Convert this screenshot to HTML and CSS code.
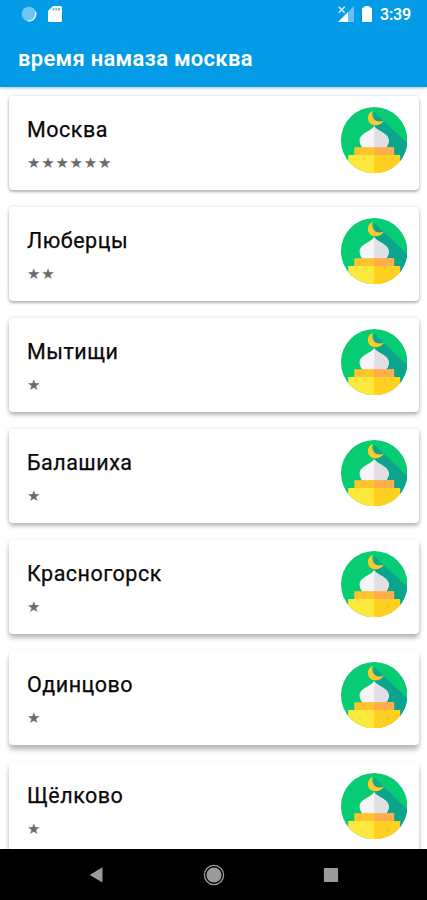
FILE: index.html
```html
<!DOCTYPE html>
<html lang="ru">
<head>
<meta charset="utf-8">
<title>время намаза москва</title>
<link rel="stylesheet" href="styles.css">
</head>
<body>
<svg class="defs" aria-hidden="true">
  <defs>
    <clipPath id="disc"><circle cx="33.2" cy="33.2" r="33.2"/></clipPath>
    <symbol id="mosque" viewBox="0 0 66.4 66.4">
      <g clip-path="url(#disc)">
        <path fill="#08cc74" d="M0 0h67v67H0z"/>
        <path fill="#0aa58c" d="M33 4.500L67 37V54H53V46L33 30V14z"/>
        <path fill="#ffc929" d="M32 3.800C28.500 5.300 26.600 8.200 26.900 11.700C27.300 15.700 30.400 18.200 34.400 18.200C38.100 18.200 41.300 16.500 42.900 13.400C39.100 15.600 34.300 14.600 32.200 11C30.800 8.700 30.700 6.300 32 3.800z"/>
        <path fill="#f6f5f7" d="M33.200 18.800C31.100 24.400 18.600 25.800 18.600 33.600C18.600 36.600 19.800 38.800 21.600 40.800H44.800C46.600 38.800 47.800 36.600 47.800 33.600C47.800 25.800 35.300 24.400 33.200 18.800z"/>
        <path fill="#e0dfe3" d="M33.200 18.800C35.300 24.400 47.800 25.800 47.800 33.600C47.800 36.600 46.600 38.800 44.800 40.800H33.200z"/>
        <path fill="#ffc32c" d="M13.300 40.300h39.800v8H13.300z"/>
        <path fill="#ffad4f" d="M33.200 40.300h19.900v8H33.200z"/>
        <path fill="#ffe83d" d="M7.200 48h51.900v19H7.200z"/>
        <path fill="#ffd01f" d="M33.200 48h25.900v19H33.200z"/>
      </g>
    </symbol>
  </defs>
</svg>
<div class="screen">
  <header class="top">
    <div class="status">
      <svg class="sync" viewBox="0 0 16 16"><circle cx="8" cy="8" r="7.300" fill="#6fc5f3"/><path d="M14.300 5.500A7 7 0 0 1 6.500 14.800" fill="none" stroke="#d9f2ff" stroke-width="1.500"/></svg>
      <svg class="sd" viewBox="0 0 14 16"><path fill="#fff" d="M5 0h7.500Q14 0 14 1.500v13Q14 16 12.500 16h-11Q0 16 0 14.500V5z"/><path d="M5.500 2v2.500M8.300 2v2.500M11 2v2.500" stroke="#5cbcf0" stroke-width="1.800"/></svg>
      <span class="spacer"></span>
      <svg class="signal" viewBox="0 0 16 16"><path fill="#65c1f2" d="M16 0v16H9.500V6.500z"/><path fill="#fff" d="M10 6v10H0z"/><path d="M.7.700l6 6M6.700.700l-6 6" stroke="#d5efff" stroke-width="1.500"/></svg>
      <svg class="battery" viewBox="0 0 10 16"><path fill="#fff" d="M2.500 0h5v1.500H9q1 0 1 1V15q0 1-1 1H1q-1 0-1-1V2.500q0-1 1-1h1.500z"/></svg>
      <span class="time">3:39</span>
    </div>
    <h1>время намаза москва</h1>
  </header>
  <main class="list">
    <article class="card"><div><h2>Москва</h2><p>★★★★★★</p></div><svg class="icon"><use href="#mosque"/></svg></article>
    <article class="card"><div><h2>Люберцы</h2><p>★★</p></div><svg class="icon"><use href="#mosque"/></svg></article>
    <article class="card"><div><h2>Мытищи</h2><p>★</p></div><svg class="icon"><use href="#mosque"/></svg></article>
    <article class="card"><div><h2>Балашиха</h2><p>★</p></div><svg class="icon"><use href="#mosque"/></svg></article>
    <article class="card"><div><h2>Красногорск</h2><p>★</p></div><svg class="icon"><use href="#mosque"/></svg></article>
    <article class="card"><div><h2>Одинцово</h2><p>★</p></div><svg class="icon"><use href="#mosque"/></svg></article>
    <article class="card"><div><h2>Щёлково</h2><p>★</p></div><svg class="icon"><use href="#mosque"/></svg></article>
  </main>
  <nav class="nav">
    <svg viewBox="0 0 24 24"><path fill="#9b9b9b" d="M18.500 4.300v15.200L5.700 12z"/></svg>
    <svg viewBox="0 0 24 24"><circle cx="12" cy="12" r="9.600" fill="none" stroke="#9b9b9b" stroke-width="1.300"/><circle cx="12" cy="12" r="7.600" fill="#9b9b9b"/></svg>
    <svg viewBox="0 0 24 24"><rect x="4.900" y="4.900" width="14.200" height="14.200" rx="1" fill="#9b9b9b"/></svg>
  </nav>
</div>
</body>
</html>
```
FILE: styles.css
```css
* { box-sizing: border-box; }
body { margin: 0; background: #fff; font-family: Roboto, "Liberation Sans", sans-serif; }
h1, h2, p { margin: 0; }
svg { display: block; flex: none; }
.defs { position: absolute; width: 0; height: 0; }
.screen { display: flex; flex-direction: column; height: 900px; overflow: hidden; }
.top {
  position: relative;
  flex: none;
  height: 87px;
  background: #039be5;
  color: #fff;
  box-shadow: 0 1px 3px rgba(0, 0, 0, .28);
}
.status { display: flex; align-items: center; height: 28px; padding: 0 16px 0 21px; }
.sync { width: 16px; height: 16px; }
.sd { width: 14px; height: 16px; margin-left: 11px; }
.spacer { flex: 1; }
.signal { width: 16px; height: 16px; margin-right: 8px; }
.battery { width: 10px; height: 16px; margin-right: 8px; }
.time { font-size: 16px; font-weight: 600; line-height: 29px; letter-spacing: -.2px; }
h1 { padding-left: 18px; font-size: 22px; font-weight: 600; line-height: 61px; letter-spacing: .28px; white-space: nowrap; }
.list {
  display: flex;
  flex: 1;
  flex-direction: column;
  gap: 17px;
  min-height: 0;
  padding: 9px 8px 0 9px;
  overflow: hidden;
}
.card {
  display: flex;
  flex: none;
  justify-content: space-between;
  height: 94px;
  padding: 11px 12px 0 18px;
  border-radius: 4px;
  background: #fff;
  box-shadow: 0 2px 3px rgba(0, 0, 0, .26), 0 0 4px rgba(0, 0, 0, .14);
}
.card:nth-child(n+3) { box-shadow: 0 3px 4px rgba(0, 0, 0, .26), 0 0 4px rgba(0, 0, 0, .12); }
.card:nth-child(n+5) { box-shadow: 0 4px 5px rgba(0, 0, 0, .25), 0 1px 4px rgba(0, 0, 0, .1); }
.card:nth-child(n+6) { box-shadow: 0 5px 5px rgba(0, 0, 0, .24), 0 1px 4px rgba(0, 0, 0, .08); }
h2 { color: #080808; font-size: 21.500px; font-weight: 400; line-height: 46px; letter-spacing: .5px; -webkit-text-stroke: .25px #080808; }
p { color: #6b6b6b; font-family: "DejaVu Sans", sans-serif; font-size: 15px; line-height: 20px; letter-spacing: .75px; }
.icon { width: 66.400px; height: 66.400px; }
.nav {
  display: flex;
  flex: none;
  align-items: center;
  justify-content: space-between;
  height: 51px;
  padding: 0 84px;
  background: #000;
}
.nav svg { width: 24px; height: 24px; }
```
